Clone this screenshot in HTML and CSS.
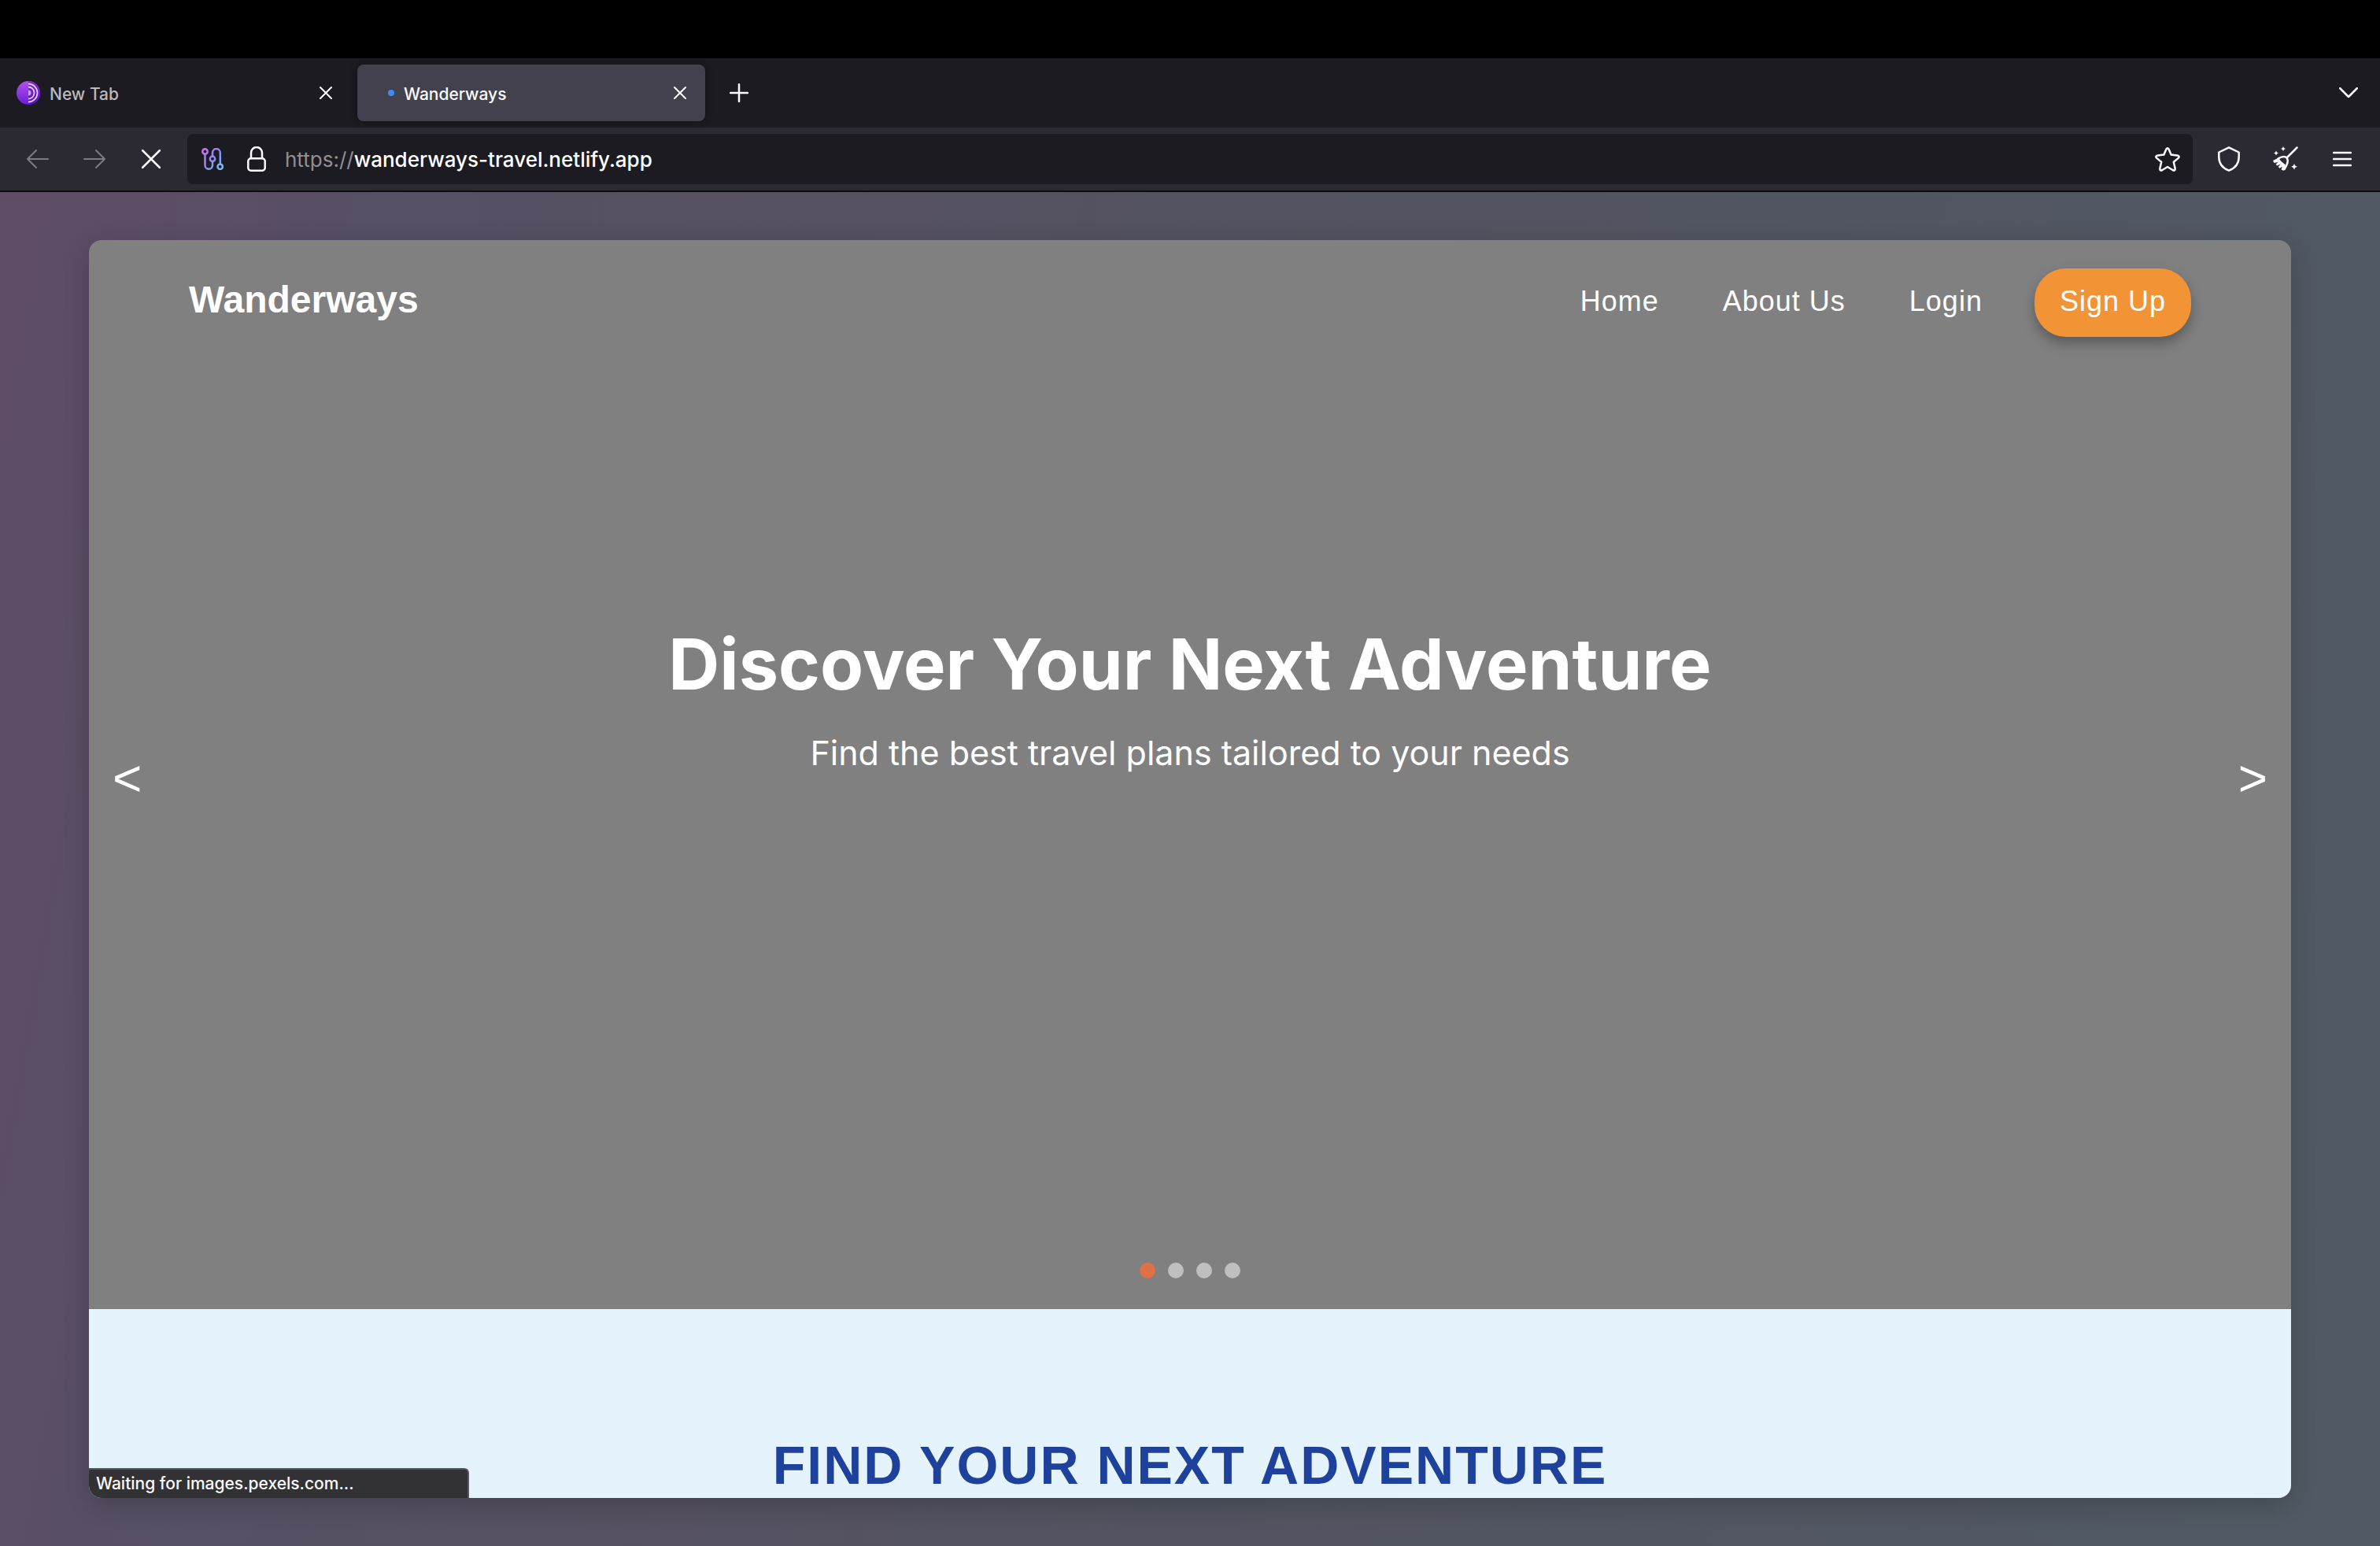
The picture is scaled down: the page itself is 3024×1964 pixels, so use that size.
FILE: index.html
```html
<!DOCTYPE html>
<html lang="en">
<head>
<meta charset="utf-8">
<title>Wanderways</title>
<link rel="stylesheet" href="styles.css">
</head>
<body>
<div class="screen-top"></div>
<header class="chrome">
  <div class="tab-bar">
    <div class="tab">
      <svg class="favicon" viewBox="0 0 30 30" aria-hidden="true">
        <defs>
          <linearGradient id="onion" x1="0" y1="0" x2="0" y2="1">
            <stop offset="0" stop-color="#b450f0"/><stop offset="1" stop-color="#6a1fd6"/>
          </linearGradient>
          <linearGradient id="onion-right" x1="0" y1="0" x2="0" y2="1">
            <stop offset="0" stop-color="#7f2bc4"/><stop offset="1" stop-color="#5a10c8"/>
          </linearGradient>
        </defs>
        <circle cx="15" cy="15" r="15" fill="url(#onion)"/>
        <path d="M15 0a15 15 0 0 1 0 30z" fill="url(#onion-right)"/>
        <g fill="none" stroke="#e3c9f7" stroke-width="1.8">
          <path d="M15 3.500a11.500 11.500 0 0 1 0 23"/><path d="M15 7.500a7.500 7.500 0 0 1 0 15"/>
        </g>
        <path d="M15 11.500a3.500 3.500 0 0 1 0 7z" fill="#c79be8"/>
      </svg>
      <span class="tab-title">New Tab</span>
      <button class="icon-button" aria-label="Close New Tab"><svg width="16" height="16" viewBox="0 0 16 16"><path d="M1 1l14 14M15 1L1 15"/></svg></button>
    </div>
    <div class="tab tab-active">
      <span class="loading-dot"></span>
      <span class="tab-title">Wanderways</span>
      <button class="icon-button" aria-label="Close Wanderways"><svg width="16" height="16" viewBox="0 0 16 16"><path d="M1 1l14 14M15 1L1 15"/></svg></button>
    </div>
    <button class="icon-button new-tab" aria-label="Open a new tab"><svg width="24" height="24" viewBox="0 0 24 24"><path class="thick" d="M12 1v22M1 12h22"/></svg></button>
    <button class="icon-button all-tabs" aria-label="List all tabs"><svg width="24" height="14" viewBox="0 0 24 14"><path class="thick" d="M1 1l11 11L23 1"/></svg></button>
  </div>
  <div class="toolbar">
    <button class="icon-button tool muted" aria-label="Back"><svg width="28" height="24" viewBox="0 0 28 24"><path d="M27 12H2M12 1L1 12l11 11"/></svg></button>
    <button class="icon-button tool muted" aria-label="Forward"><svg width="28" height="24" viewBox="0 0 28 24"><path d="M1 12h25M16 1l11 11-11 11"/></svg></button>
    <button class="icon-button tool" aria-label="Stop"><svg width="24" height="24" viewBox="0 0 24 24"><path class="thick" d="M1 1l22 22M23 1L1 23"/></svg></button>
    <div class="url-bar">
      <button class="icon-button circuit" aria-label="Circuit"><svg width="28" height="28" viewBox="0 0 28 28">
        <defs><linearGradient id="circuit" gradientUnits="userSpaceOnUse" x1="0" y1="0" x2="28" y2="28"><stop offset="0" stop-color="#d66cf0"/><stop offset=".5" stop-color="#8a8cf8"/><stop offset="1" stop-color="#6cc8fa"/></linearGradient></defs>
        <g class="thick" fill="none" stroke="url(#circuit)"><circle cx="4.500" cy="4.500" r="3.200"/><circle cx="14" cy="13.800" r="3.200"/><circle cx="23.700" cy="23.700" r="3.200"/>
        <path d="M4.500 7.700V22a4.700 4.700 0 0 0 9.500 0v-5M14 10.600V6a4.900 4.900 0 0 1 9.800 0v14.500"/></g>
      </svg></button>
      <button class="icon-button" aria-label="Site information"><svg width="24" height="32" viewBox="0 0 24 32"><rect class="thick" x="1.300" y="15.300" width="21.400" height="15.400" rx="3.500"/><path class="thick" d="M5 15V8a7 7 0 0 1 14 0v7"/></svg></button>
      <span class="url"><span class="scheme">https://</span>wanderways-travel.netlify.app</span>
      <button class="icon-button bookmark" aria-label="Bookmark this page"><svg width="32" height="31" viewBox="0 0 32 31"><path class="thick" d="M14.300 2.700Q16 -.3 17.700 2.700L20.600 9.600 28.500 10.600Q32 11.300 29.700 13.900L23.800 18.700 25.600 26.700Q26 30.500 22.600 29L16 25 9.400 29Q6 30.500 6.400 26.700L8.200 18.700 2.300 13.900Q0 11.300 3.500 10.600L11.400 9.600z"/></svg></button>
    </div>
    <button class="icon-button tool" aria-label="Security level"><svg width="28" height="32" viewBox="0 0 28 32"><path class="thick" d="M14 1.300L26.700 7.500V13.500Q26.500 26 14 30.700 1.500 26 1.300 13.500V7.500z"/></svg></button>
    <button class="icon-button tool" aria-label="New identity"><svg width="32" height="32" viewBox="0 0 32 32">
      <path class="thick" d="M30.500 1.500L18.500 13.500M6.500 15.500Q14 11 17.500 14.500 21 19 14.500 29"/>
      <path class="solid" d="M7 14.500L10 18.500 16 23.500 13.500 31 10.500 29.200 12 25.500 8.500 27.800 6.800 26 9.500 22.500 5 24.500 3.800 22.500 6.500 20 1.500 21 0 18z"/>
      <path class="solid" d="M13 0l1 2 2 1-2 1-1 2-1-2-2-1 2-1zM4 5.500l1 2 2 1-2 1-1 2-1-2-2-1 2-1zM27 22l1.200 2.600 2.600 1.200-2.600 1.200-1.200 2.600-1.200-2.600-2.600-1.200 2.600-1.200z"/>
    </svg></button>
    <button class="icon-button tool" aria-label="Menu"><svg width="24" height="20" viewBox="0 0 24 20"><path class="thick" d="M1 2h22M1 10h22M1 18h22"/></svg></button>
  </div>
</header>
<div class="letterbox">
  <div class="viewport">
    <main class="page">
      <section class="hero">
        <nav class="site-nav">
          <a class="brand" href="#">Wanderways</a>
          <a class="nav-link" href="#">Home</a>
          <a class="nav-link" href="#">About Us</a>
          <a class="nav-link" href="#">Login</a>
          <a class="sign-up" href="#">Sign Up</a>
        </nav>
        <div class="slide">
          <h1>Discover Your Next Adventure</h1>
          <p>Find the best travel plans tailored to your needs</p>
        </div>
        <button class="arrow arrow-prev" aria-label="Previous slide">&lt;</button>
        <button class="arrow arrow-next" aria-label="Next slide">&gt;</button>
        <div class="dots">
          <button class="dot dot-active" aria-label="Slide 1"></button>
          <button class="dot" aria-label="Slide 2"></button>
          <button class="dot" aria-label="Slide 3"></button>
          <button class="dot" aria-label="Slide 4"></button>
        </div>
      </section>
      <section class="finder">
        <h2>Find Your Next Adventure</h2>
      </section>
    </main>
    <div class="status">Waiting for images.pexels.com...</div>
  </div>
</div>
</body>
</html>
```
FILE: styles.css
```css
* { box-sizing: border-box; }

body {
  margin: 0;
  min-height: 100vh;
  display: flex;
  flex-direction: column;
  background: #000;
  color: #fff;
  font-family: Inter, sans-serif;
}

h1, h2, p { margin: 0; }
a { color: inherit; text-decoration: none; }
button { margin: 0; border: 0; padding: 0; background: none; color: inherit; font: inherit; }

.screen-top { height: 74px; flex: none; }

/* Browser chrome */
.chrome { flex: none; border-bottom: 2px solid #0c0c0d; }

.icon-button { display: flex; align-items: center; justify-content: center; flex: none; }
.icon-button svg { display: block; fill: none; stroke: #fbfbfe; stroke-width: 2; stroke-linecap: round; stroke-linejoin: round; }
.icon-button .thick { stroke-width: 2.5; }
.icon-button .solid { fill: #fbfbfe; stroke: none; }
.muted svg { stroke: #7d7c82; }

.tab-bar { height: 88px; display: flex; align-items: center; background: #1c1b22; }
.tab { width: 442px; height: 72px; display: flex; align-items: center; padding: 0 24px; border-radius: 8px; font-size: 21px; font-weight: 500; color: #bbbabe; }
.tab:first-child { width: 446px; margin-right: 8px; padding-left: 21px; }
.favicon { width: 30px; height: 30px; margin-right: 12px; }
.tab-title { flex: 1; padding-top: 3px; }
.tab-active { background: #42414d; color: #fbfbfe; box-shadow: 0 0 8px rgba(0, 0, 0, .4); }
.loading-dot { width: 8px; height: 8px; margin: 0 12px 0 15px; border-radius: 50%; background: #3a8bff; }
.new-tab { margin-left: 31px; }
.all-tabs { margin: 0 28px 0 auto; }

.toolbar { height: 80px; display: flex; align-items: center; padding: 0 12px; background: #2b2a33; }
.tool { width: 72px; height: 64px; }
.url-bar { flex: 1; height: 64px; display: flex; align-items: center; margin: 0 10px; padding: 0 16px 0 18px; gap: 24px; border-radius: 8px; background: #1c1b22; }
.circuit { margin-right: 6px; }
.url { font-size: 26px; font-weight: 500; }
.scheme { color: #8f8f96; font-weight: 400; }
.bookmark { margin-left: auto; }

/* Letterboxed content area */
.letterbox {
  flex: 1;
  display: flex;
  padding: 61px 113px;
  background: linear-gradient(100deg, #5f4d64 0%, #584f64 12%, #535361 50%, #505a64 100%);
}
.viewport { position: relative; flex: 1; display: flex; border-radius: 16px; overflow: hidden; box-shadow: 0 8px 32px rgba(0, 0, 0, .2); }
.page { flex: 1; display: grid; grid-template-rows: 85fr 15fr; }

.hero { position: relative; display: flex; flex-direction: column; background: #808080; }
.site-nav { display: flex; align-items: center; padding: 36px 127px 0; font-family: "Liberation Sans", sans-serif; font-size: 36px; letter-spacing: 1px; }
.brand { margin-right: auto; padding-bottom: 8px; font-size: 48px; font-weight: 700; letter-spacing: 0; }
.nav-link { margin-right: 81px; padding-bottom: 4px; }
.sign-up { display: flex; align-items: center; height: 87px; margin-left: -15px; padding: 0 32px 4px; border-radius: 40px; background: #f29335; box-shadow: 0 8px 16px rgba(0, 0, 0, .3); }

.slide { margin-top: 354px; text-align: center; }
.slide h1 { font-size: 90px; line-height: 124px; font-weight: 700; }
.slide p { font-size: 43px; line-height: 60px; margin-top: 20px; }

.arrow { position: absolute; top: 0; bottom: 0; padding-top: 10px; font-family: "Liberation Sans", sans-serif; font-size: 64px; line-height: 64px; }
.arrow-prev { left: 30px; }
.arrow-next { right: 30px; }

.dots { display: flex; justify-content: center; gap: 16px; margin: auto 0 39px; }
.dot { width: 20px; height: 20px; border-radius: 50%; background: #bfbfbf; }
.dot-active { background: #e07046; }

.finder { padding-top: 158px; background: #e5f3fc; color: #1e429c; text-align: center; }
.finder h2 { font-family: "Liberation Sans", sans-serif; font-size: 68px; line-height: 80px; letter-spacing: 2px; text-transform: uppercase; }

.status { position: absolute; left: 0; bottom: 0; width: 483px; height: 38px; padding-left: 9px; border: 2px solid #55555f; border-left: 0; border-bottom: 0; border-top-right-radius: 6px; background: #323234; color: #fbfbfe; font-size: 21px; line-height: 36px; font-weight: 500; }
```
